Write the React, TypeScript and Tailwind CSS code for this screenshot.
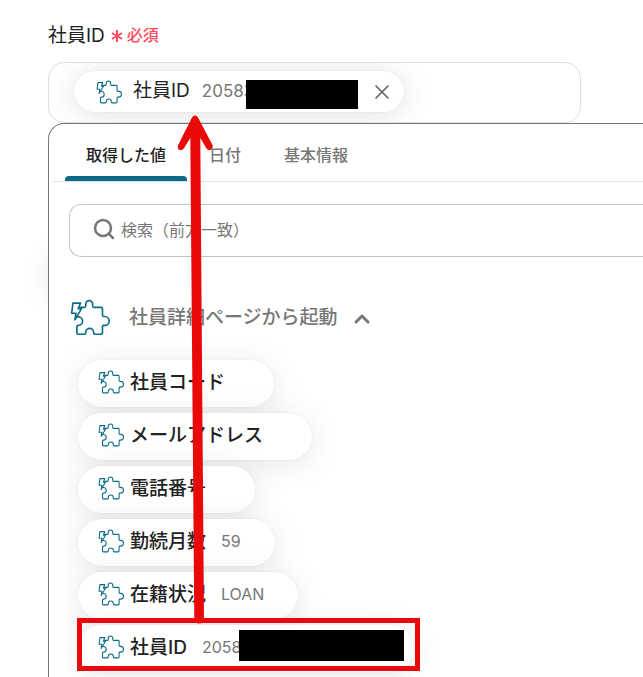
import { ChevronUp, Search, X } from 'lucide-react'

const tabs = ['取得した値', '日付', '基本情報']

const items = [
  { label: '社員コード' },
  { label: 'メールアドレス' },
  { label: '電話番号' },
  { label: '勤続月数', value: '59' },
  { label: '在籍状況', value: 'LOAN' },
  { label: '社員ID', value: '2058', masked: true },
]

function PuzzleIcon({ className, strokeWidth }: { className: string; strokeWidth: number }) {
  return (
    <svg
      viewBox="30 27 122 110"
      className={className}
      fill="none"
      stroke="#0b6b86"
      strokeWidth={strokeWidth}
      strokeLinejoin="round"
      strokeLinecap="round"
      aria-hidden="true"
    >
      <path d="M61 51H74Q78 51 78 46V41A10.500 10.500 0 0 1 99 41V46Q99 51 103 51H125Q129 51 129 55V75Q129 79 133 79H136A13 13 0 0 1 136 106H133Q129 106 129 110V129Q129 133 125 133H106Q102 133 102 129V127A12 12 0 0 0 78 127V129Q78 133 74 133H55Q51 133 51 129V111Q51 106 55 106A13 13 0 0 0 56 80H51" />
      <path d="M39 38H62L55 55H65L45 89L48 69H35Z" />
    </svg>
  )
}

function Annotation() {
  return (
    <svg
      className="pointer-events-none absolute top-0 left-0"
      width="643"
      height="677"
      fill="#ea0909"
      aria-hidden="true"
    >
      <path d="M195 115.500Q197 115.500 198 117.500L212.500 145Q213.500 148 211 149.800Q208.500 151 206.500 148.500L200.300 138L204 620Q204 623.500 199 623.500Q194.300 623.500 194.300 620L190.300 138L183.800 148.500Q181.500 151 179 149.800Q177 148 178.200 145L192 117.500Q193 115.500 195 115.500Z" />
    </svg>
  )
}

export default function App() {
  return (
    <div className="relative min-h-screen overflow-hidden bg-white pt-[22px] pl-12 font-[Inter,'Noto_Sans_CJK_JP',sans-serif] text-[#222]">
      <div className="flex h-7 items-center">
        <span className="text-[19px]">社員ID</span>
        <svg className="ml-1.5 size-3" viewBox="0 0 12 12" stroke="#ff4b5c" strokeWidth="2" aria-hidden="true">
          <path d="M6 0V12M1 3L11 9M11 3L1 9" />
        </svg>
        <span className="mb-0.5 ml-1 text-base font-medium text-[#ff4b5c]">必須</span>
      </div>

      <div className="mt-3 mr-[62px] flex h-[61px] overflow-hidden rounded-2xl border border-[#dddde4] pt-2 pl-[25px]">
        <div className="flex h-[41px] items-center rounded-full bg-white pr-2.5 pl-[22px] shadow-[0_3px_30px_rgba(0,0,0,0.12),0_0_2px_rgba(0,0,0,0.08)]">
          <PuzzleIcon className="h-6 w-[26px]" strokeWidth={5} />
          <span className="ml-[11px] text-[19px]">社員ID</span>
          <span className="ml-3 text-[17px] text-[#777]">20583</span>
          <span className="relative mt-1.5 -ml-2 h-[29px] w-28 bg-black" />
          <button type="button" aria-label="削除" className="ml-3 text-[#666]">
            <X className="size-6" strokeWidth={1.75} />
          </button>
        </div>
      </div>

      <div className="relative">
        <div className="absolute top-[130px] left-1 h-10 w-40 rounded-full shadow-[0_4px_30px_rgba(0,0,0,0.15)]" />
        <div className="relative rounded-tl-2xl border-t border-l border-[#777] bg-white pb-4">
          <div role="tablist" className="ml-1 flex h-[58px] gap-px border-b border-[#e2e2e2] pl-3">
            {tabs.map((tab, i) => (
              <button
                key={tab}
                type="button"
                role="tab"
                aria-selected={i === 0}
                className={`flex flex-col text-base font-medium ${i === 0 ? 'text-[#222]' : 'text-[#777]'}`}
              >
                <span className="flex flex-1 items-center px-[21px] pt-2.5">{tab}</span>
                <span className={`h-[5px] w-full rounded-t ${i === 0 ? 'bg-[#0b6b86]' : ''}`} />
              </button>
            ))}
          </div>

          <label className="mt-[22px] ml-5 flex h-[53px] items-center rounded-l-xl border border-r-0 border-[#c4c4c4] pb-0.5 pl-[22px]">
            <Search className="mb-0.5 size-6 shrink-0 text-[#777]" strokeWidth={2.5} />
            <input
              type="text"
              aria-label="検索"
              placeholder="検索（前方一致）"
              className="ml-[5px] min-w-0 flex-1 text-base outline-none placeholder:text-[#777]"
            />
          </label>

          <button type="button" aria-expanded="true" className="mt-[42px] ml-[21px] flex h-[37px] items-center text-[#777]">
            <PuzzleIcon className="h-[37px] w-10" strokeWidth={5} />
            <span className="mt-0.5 ml-[19px] text-[19px] font-medium">社員詳細ページから起動</span>
            <ChevronUp className="mt-0.5 ml-3 size-6" strokeWidth={3} />
          </button>

          <ul className="mt-6 ml-[29px] flex flex-col items-start gap-1.5">
            {items.map((item) => (
              <li key={item.label}>
                <button
                  type="button"
                  className={`flex h-[47px] items-center rounded-full bg-white pl-5 shadow-[0_4px_30px_rgba(0,0,0,0.1),0_0_2px_rgba(0,0,0,0.08)] ${item.masked ? 'pr-2.5' : 'pr-[34px]'}`}
                >
                  <PuzzleIcon className="mb-1 h-6 w-[26px]" strokeWidth={5} />
                  <span className="ml-1.5 text-[19px] font-medium">{item.label}</span>
                  <span className="mb-1 ml-[15px] text-base text-[#777]">{item.value}</span>
                  {item.masked && <span className="relative mb-1.5 -ml-0.5 h-[31px] w-[165px] bg-black" />}
                </button>
              </li>
            ))}
          </ul>
        </div>
        <div className="absolute top-[495px] left-[29px] h-[53px] w-[343px] border-5 border-[#ea0909]" />
      </div>

      <Annotation />
    </div>
  )
}
